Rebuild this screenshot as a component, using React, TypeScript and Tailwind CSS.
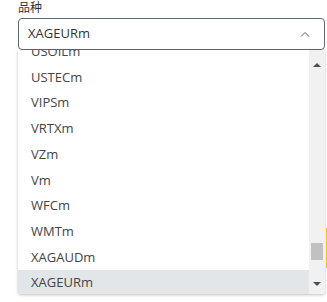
import React from "react";

const items = [
  "USOILm",
  "USTECm",
  "VIPSm",
  "VRTXm",
  "VZm",
  "Vm",
  "WFCm",
  "WMTm",
  "XAGAUDm",
  "XAGEURm",
];

export default function App() {
  const selected = "XAGEURm";

  return (
    <div className="relative w-[327px] h-[302px] bg-white pl-[18px] pr-[2px] font-['Open_Sans','Noto_Sans_CJK_SC',sans-serif]">
      {/* label */}
      <div className="h-[18px] pt-[1px] text-[12px] leading-[14px] text-[#333]">品种</div>

      {/* select box */}
      <div className="flex items-center justify-between h-[32px] border border-[#5f6770] rounded-[4px] pl-[9px] pr-[14px] text-[13px] text-[#333]">
        <span>{selected}</span>
        <svg width="10" height="6" viewBox="0 0 10 6" fill="none">
          <path d="M1 5.5L5 1.5L9 5.5" stroke="#666" strokeWidth="1" />
        </svg>
      </div>

      {/* dropdown */}
      <div className="flex h-[244px] bg-white shadow-[0_1px_3px_rgba(0,0,0,0.25)] rounded-b-[3px] overflow-hidden">
        <div className="flex-1 overflow-hidden">
          <div className="-mt-[11px]">
            {items.map((it) => (
              <div
                key={it}
                className={
                  "h-[25.7px] flex items-center pl-[13px] text-[13px] text-[#444] " +
                  (it === selected ? "bg-[#e3e6e8]" : "")
                }
              >
                {it}
              </div>
            ))}
          </div>
        </div>

        {/* scrollbar */}
        <div className="w-[16px] bg-[#f1f1f1] flex flex-col items-center">
          <div className="h-[17px] flex items-end justify-center">
            <div className="w-0 h-0 border-l-[4px] border-r-[4px] border-b-[4px] border-l-transparent border-r-transparent border-b-[#505050]" />
          </div>
          <div className="h-[176px]" />
          <div className="w-[12px] h-[17px] bg-[#c1c1c1]" />
          <div className="flex-1 flex items-end justify-center pb-[8px]">
            <div className="w-0 h-0 border-l-[4px] border-r-[4px] border-t-[4px] border-l-transparent border-r-transparent border-t-[#505050]" />
          </div>
        </div>
      </div>

      {/* yellow edge marker */}
      <div className="absolute left-[326px] top-[228px] w-[1px] h-[40px] bg-[#f5d000]" />
    </div>
  );
}
